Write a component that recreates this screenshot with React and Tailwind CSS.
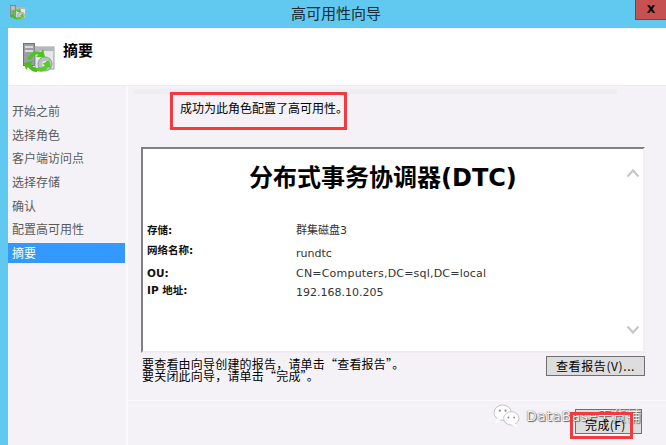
const cjk = { fontFamily: '"Noto Sans CJK SC", "Liberation Sans", sans-serif' };
const dv = { fontFamily: '"DejaVu Sans", "Noto Sans CJK SC", sans-serif' };

function WizardIcon({ className }) {
  return (
    <svg viewBox="0 0 32 32" className={className}>
      <rect x="0.5" y="0.5" width="11" height="22" fill="#9a9fa3" stroke="#6f7478" strokeWidth="1" />
      <rect x="2" y="3" width="8" height="2" fill="#d9dcde" />
      <rect x="2" y="7" width="8" height="2" fill="#d9dcde" />
      <rect x="12" y="4" width="19" height="22" fill="#e4e6e8" stroke="#9a9ea2" strokeWidth="1" />
      <rect x="12" y="4" width="19" height="4" fill="#b4b8bc" />
      <circle cx="22" cy="21" r="7" fill="#b9c0c6" stroke="#8f979e" strokeWidth="1" />
      <circle cx="22" cy="21" r="3" fill="#eef0f2" />
      <path d="M4 16 C7 9 13 7 18 9 L20 6 L22 14 L13 14 L15.500 11.500 C12 11 9 13 8 17 Z" fill="#4fc31f" />
      <path d="M1 20 L10 18 L8 21 C10 24 12 25 15 25 L14 29 C10 29 7 27 5 24 L3 27 Z" fill="#49bb1b" />
      <path d="M14 28 C19 30 23 28 25 24 L28 25 L26 17 L19 21 L22 22 C21 24 18 25 15 24 Z" fill="#5acb26" />
    </svg>
  );
}

function Chevron({ up }) {
  return (
    <svg viewBox="0 0 14 10" className="w-[14px] h-[10px]">
      <path d={up ? "M1.500 8.500 L7 2.500 L12.500 8.500" : "M1.500 1.500 L7 7.500 L12.500 1.500"} fill="none" stroke="#c6c6cb" strokeWidth="2.200" />
    </svg>
  );
}

const steps = ["开始之前", "选择角色", "客户端访问点", "选择存储", "确认", "配置高可用性", "摘要"];

const rows = [
  { k: "存储:", v: "群集磁盘3", h: "h-[22px]", kt: 0, dv: 1, t: 0 },
  { k: "网络名称:", v: "rundtc", h: "h-[21px]", kt: -2, dv: 2, t: 0 },
  { k: "OU:", v: "CN=Computers,DC=sql,DC=local", h: "h-[19px]", kt: 0, dv: 1, t: 0.2 },
  { k: "IP 地址:", v: "192.168.10.205", h: "h-[19px]", kt: -2, dv: 1, t: 0 },
];

export default function App() {
  return (
    <div className="relative w-[666px] h-[445px] overflow-hidden bg-[#61c9f0] pl-2 flex flex-col" style={cjk}>
      <div className="relative h-[28px] -ml-2 flex items-center justify-center shrink-0 border-b border-[#7fb9d3]">
        <WizardIcon className="absolute left-[10px] top-[5px] w-[16px] h-[16px]" />
        <span className="text-[15px] leading-[18px] text-[#1a2a33] -mt-[2px] ml-[6px]">高可用性向导</span>
        <div className="absolute right-0 top-0 w-[31px] h-[20px] bg-[#c75050] border-l border-b border-[#8f3a3a] flex items-center justify-center">
          <span className="text-[11px] leading-none font-bold text-black" style={dv}>X</span>
        </div>
      </div>

      <div className="h-[58px] bg-white flex items-start pl-[15px] pt-[15px] gap-[8px] shrink-0 border-b border-[#f3e9ee]">
        <WizardIcon className="w-[32px] h-[32px]" />
        <span className="text-[15px] leading-[18px] font-bold text-black -mt-[2px]">摘要</span>
      </div>

      <div className="flex-1 flex min-h-0 bg-[#f5f2f7]">
        <div className="w-[118px] shrink-0 pt-[13px] flex flex-col">
          {steps.map((s, i) => (
            <div
              key={s}
              className={`flex items-center pl-[4px] text-[12px] leading-none ${
                i === 6 ? "bg-[#3399ff] text-white h-[20px] w-[117px] mt-[2px]" : "text-[#5a5a5a] h-[23.700px]"
              }`}
            >
              {s}
            </div>
          ))}
        </div>
        <div className="w-[2px] shrink-0 bg-[#fbf9fb]" />

        <div className="flex-1 flex flex-col min-w-0">
          <div className="h-[5px] mt-[3px] ml-[6px] mr-[49px] bg-[#eeeef0] shrink-0" />
          <div className="pl-[52px] pt-[6px] h-[53px] shrink-0 text-[12px] leading-[16px] text-black">成功为此角色配置了高可用性。</div>

          <div className="ml-[13px] mr-[21px] h-[206px] shrink-0 bg-white border-2 border-t-2 border-[#808080] border-r-[#f2eef4] border-b-[#efebf1] flex">
            <div className="flex-1 min-w-0 pl-[4px]">
              <div className="h-[74px] pl-[102px] pt-[13px] text-[24px] leading-[32px] font-bold text-black whitespace-nowrap" style={dv}>分布式事务协调器(DTC)</div>
              <div className="flex flex-col">
                {rows.map((r) => (
                  <div key={r.k} className={`flex ${r.h}`}>
                    <div className="w-[149px] shrink-0 text-[10.500px] leading-[14px] font-bold text-[#111]" style={{ ...dv, marginTop: r.kt }}>{r.k}</div>
                    <div className="text-[11px] leading-[14px] text-[#333] whitespace-nowrap" style={{ ...dv, marginTop: r.dv, letterSpacing: r.t }}>{r.v}</div>
                  </div>
                ))}
              </div>
            </div>
            <div className="w-[20px] shrink-0 flex flex-col items-center justify-between pt-[19px] pb-[16px]">
              <Chevron up />
              <Chevron />
            </div>
          </div>

          <div className="flex items-start ml-[14px] mr-[21px] pt-[3px] h-[47px] shrink-0">
            <div className="flex-1 text-[12px] leading-[12px] pt-[2px] text-black whitespace-nowrap tracking-[0.2px]">
              <div>要查看由向导创建的报告，请单击“查看报告”。</div>
              <div>要关闭此向导，请单击“完成”。</div>
            </div>
            <div className="w-[99px] h-[20px] bg-[#dddddd] border border-[#707070] flex items-center justify-center text-[12px] leading-none text-black tracking-[0.6px] whitespace-nowrap">查看报告(V)...</div>
          </div>

          <div className="h-[1px] bg-[#fbf9fb] shrink-0" />
          <div className="flex-1 flex justify-end items-start pt-[8px] pr-[24px]">
            <div className="w-[67px] h-[25px] bg-[#dddddd] border border-[#3c7fb1] flex items-center pl-[9px] pt-[6px] text-[12px] leading-none text-black tracking-[0.4px] whitespace-nowrap">
              <span className="relative z-10">完成(F)</span>
            </div>
          </div>
        </div>
      </div>

      <div className="absolute left-[493px] top-[404px] flex items-center gap-[6px]">
        <svg viewBox="0 0 28 24" className="w-[27px] h-[23px]">
          <ellipse cx="10" cy="9" rx="9" ry="8" fill="#ffffff" stroke="#b5b5b5" strokeWidth="0.800" />
          <path d="M4 15 L3 20 L8 16 Z" fill="#ffffff" />
          <ellipse cx="19" cy="15" rx="8" ry="7" fill="#ffffff" stroke="#b5b5b5" strokeWidth="0.800" />
          <path d="M23 20 L25 24 L19 21 Z" fill="#ffffff" />
          <circle cx="7" cy="7" r="1.200" fill="#8f8f8f" />
          <circle cx="13" cy="7" r="1.200" fill="#8f8f8f" />
          <circle cx="16" cy="14" r="1" fill="#8f8f8f" />
          <circle cx="22" cy="14" r="1" fill="#8f8f8f" />
        </svg>
        <span className="text-[14px] leading-[18px] text-[#f4f4f4] whitespace-nowrap tracking-[0.5px]" style={{ ...dv, textShadow: "0 0 1px #444, 1px 1px 1px #666" }}>DataBase干货铺</span>
      </div>

      <div className="absolute left-[570px] top-[412px] w-[63px] h-[27px] border-[3px] border-[#f43a3f]" />
      <div className="absolute left-[170px] top-[92px] w-[177px] h-[38px] border-[3px] border-[#f43a3f]" />
    </div>
  );
}
